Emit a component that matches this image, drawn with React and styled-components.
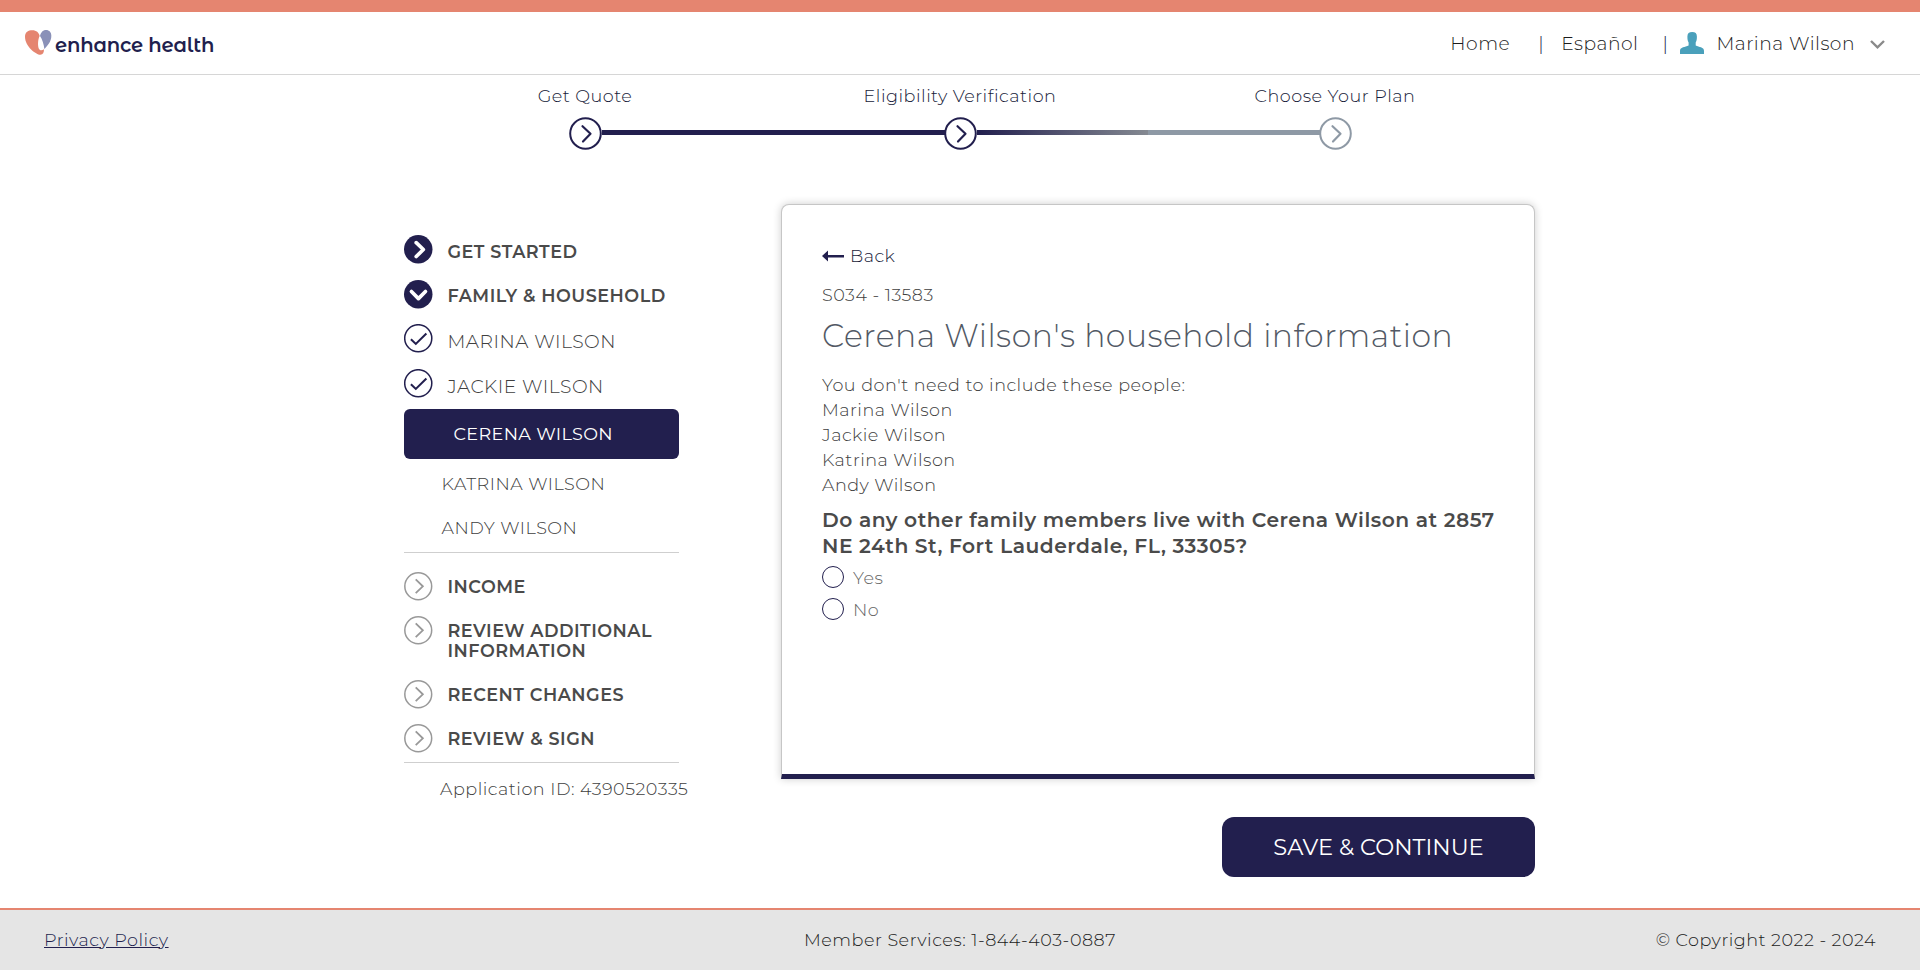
import React from 'react';
import styled, { createGlobalStyle, css } from 'styled-components';

const navy = '#221f4e';
const coral = '#e58570';
const slate = '#8e99a5';

const GlobalStyle = createGlobalStyle`
  *, *::before, *::after { box-sizing: border-box; }
  body {
    margin: 0;
    background: #fff;
    color: #404040;
    font-family: Montserrat, Inter, "Liberation Sans", sans-serif;
    font-size: 17.6px;
    font-weight: 300;
    letter-spacing: 0.5px;
  }
`;

const Page = styled.div`
  min-height: 970px;
  display: flex;
  flex-direction: column;
`;

const Header = styled.header`
  height: 75px;
  padding: 0 35px 0 25px;
  border-top: 12px solid ${coral};
  border-bottom: 1px solid #d6d6d6;
  display: flex;
  align-items: center;
  justify-content: space-between;
`;

const Logo = styled.div`
  display: flex;
  align-items: center;
  gap: 3px;
  color: ${navy};

  svg { display: block; margin-top: -2px; }
`;

const Wordmark = styled.span`
  padding-top: 3px;
  font-family: "Montserrat Alternates", Montserrat, Inter, sans-serif;
  font-size: 19.6px;
  font-weight: 600;
  letter-spacing: -0.2px;
  line-height: 24px;
`;

const TopNav = styled.nav`
  display: flex;
  align-items: center;
  color: #1c1c1c;
  font-size: 18.7px;
  white-space: nowrap;
`;

const NavLink = styled.span``;

const Pipe = styled.span`
  margin: 0 ${(p) => p.$after}px 0 ${(p) => p.$before}px;
  color: ${navy};
`;

const UserMenu = styled.div`
  display: flex;
  align-items: center;

  svg:first-child { margin-right: 12px; }
  svg:last-child { margin: 3px 0 0 15px; }
`;

const Stepper = styled.section`
  width: 1125px;
  margin: 9px auto 0;
  display: flex;
  flex-direction: column;
  align-items: center;
`;

const StepLabels = styled.div`
  width: 100%;
  display: grid;
  grid-template-columns: repeat(3, 1fr);
  text-align: center;
  color: #161a38;
  line-height: 24px;
`;

const Track = styled.div`
  width: 783px;
  height: 33px;
  margin: 9px 0 0 1.5px;
  display: flex;
  align-items: center;

  svg { display: block; flex: none; }
`;

const TrackLine = styled.div`
  flex: 1;
  height: 5px;
  margin: -2px -1px 0 0;
  background: ${(p) => (p.$partial ? `linear-gradient(to right, ${navy} 0%, #858a92 50%, ${slate} 50%)` : navy)};
`;

const Main = styled.main`
  width: 1131px;
  margin: 54px 0 0 404px;
  display: grid;
  grid-template-columns: 275px 754px;
  justify-content: space-between;
  align-items: start;
`;

const Sidebar = styled.aside`
  padding-top: 31px;
  display: flex;
  flex-direction: column;
`;

const Item = styled.div`
  height: ${(p) => p.$height}px;
  display: flex;
  align-items: flex-start;
  gap: 15px;

  svg { display: block; flex: none; }
`;

const ItemText = styled.span`
  padding-top: ${(p) => p.$drop}px;
  line-height: 20px;
  ${(p) =>
    p.$section
      ? css`color: #4a4a4a; font-weight: 600;`
      : css`font-size: 18.7px;`}
`;

const ActiveItem = styled.div`
  height: 50px;
  margin-bottom: 3px;
  padding-left: 49.5px;
  border-radius: 6px;
  background: ${navy};
  color: #fff;
  font-weight: 400;
  letter-spacing: 0.35px;
  line-height: 50px;
`;

const PendingItem = styled.div`
  padding-left: 37.5px;
  line-height: 44px;
`;

const Divider = styled.hr`
  width: 100%;
  height: 1px;
  margin: ${(p) => p.$top}px 0 ${(p) => p.$bottom}px;
  border: 0;
  background: #cfcfcf;
`;

const ApplicationId = styled.div`
  padding-left: 36px;
  line-height: 20px;
  white-space: nowrap;
`;

const Content = styled.div`
  display: flex;
  flex-direction: column;
  align-items: flex-end;
`;

const Card = styled.section`
  width: 754px;
  height: 575px;
  padding: 38px 36px 0 40px;
  border: 1px solid #c6c6c6;
  border-bottom: 5px solid ${navy};
  border-radius: 8px 8px 0 0;
  background: #fff;
  box-shadow: 0 0 8px rgba(0, 0, 0, 0.2);
`;

const BackLink = styled.div`
  display: flex;
  align-items: center;
  gap: 6px;
  color: #161a38;
  line-height: 26px;
`;

const ScreenCode = styled.div`
  margin-top: 13px;
  line-height: 26px;
`;

const Title = styled.h1`
  margin: 8px 0 0;
  color: #525965;
  font-size: 31.5px;
  font-weight: 300;
  line-height: 40px;
`;

const Paragraph = styled.div`
  margin-top: ${(p) => p.$top || 0}px;
  line-height: 25px;
`;

const Question = styled.div`
  margin-top: 10px;
  color: #4a4a4a;
  font-size: 20.26px;
  font-weight: 600;
  line-height: 26px;
`;

const Option = styled.label`
  margin-top: ${(p) => p.$top}px;
  height: 22px;
  display: flex;
  align-items: center;
  gap: 9px;
  color: #666;
  line-height: 22px;
`;

const Radio = styled.span`
  width: 22px;
  height: 22px;
  border: 1px solid ${navy};
  border-radius: 50%;
`;

const OptionText = styled.span`
  padding-top: 2px;
`;

const SaveButton = styled.button`
  width: 313px;
  height: 60px;
  margin-top: 38px;
  padding: 0;
  border: 0;
  border-radius: 12px;
  background: ${navy};
  color: #fff;
  font-family: inherit;
  font-size: 22.6px;
  font-weight: 400;
  letter-spacing: 0;
`;

const Footer = styled.footer`
  height: 62px;
  margin-top: auto;
  padding: 0 44px 2px;
  border-top: 2px solid ${coral};
  background: #e5e5e5;
  color: #1c1c1c;
  display: grid;
  grid-template-columns: 1fr auto 1fr;
  align-items: center;
`;

const PrivacyLink = styled.a`
  justify-self: start;
  color: ${navy};
  text-decoration: underline;
`;

const Copyright = styled.span`
  justify-self: end;
`;

const Heart = () => (
  <svg width="27" height="25" viewBox="0 0 81 75">
    <path fill={coral} d="M0 20C0 6 10 1 22 1c12 0 20 7 22 17-6 12-6 30-2 39 4 6 10 4 15 1 0 10-3 16-11 16C34 74 0 50 0 20z" />
    <path fill="#8a91b8" d="M45 18C48 5 56 0 63 0c10 0 16 7 16 17 0 18-11 29-21 40-1-12-6-29-13-39z" />
  </svg>
);

const UserIcon = () => (
  <svg width="24" height="22" viewBox="0 0 24 22">
    <path fill="#4aa0bb" d="M7.4 4.6C7.4 1.4 9 0 12.2 0s4.7 1.4 4.7 4.6c0 2.8-.3 4.6-1.2 5.8v3.2c3.3 1.6 8.3 1.6 8.3 5.2V22H0v-3.2c0-3.6 5.2-3.6 8.6-5.2v-3.2C7.7 9.2 7.4 7.4 7.4 4.6z" />
  </svg>
);

const MenuChevron = () => (
  <svg width="15" height="9" viewBox="0 0 15 9" fill="none" stroke="#8a8a8a" strokeWidth="2.4">
    <path d="M1 1l6.5 6.3L14 1" />
  </svg>
);

const StepIcon = ({ color }) => (
  <svg width="33" height="33" viewBox="0 0 33 33" fill="none" stroke={color} strokeWidth="2">
    <circle cx="16.5" cy="16.5" r="15.3" fill="#fff" />
    <path d="M13.5 9.2l8 7.5-7.5 7.8" strokeWidth="2.2" strokeLinecap="round" strokeLinejoin="round" />
  </svg>
);

const SolidIcon = ({ down }) => (
  <svg width="28.5" height="28.5" viewBox="0 0 28 28" fill="none" stroke="#fff" strokeWidth="3.6" strokeLinecap="round" strokeLinejoin="round">
    <circle cx="14" cy="14" r="14" fill={navy} stroke="none" />
    <path d={down ? 'M7.3 11.3l6.9 7 6.9-7' : 'M12 7.5l7 6.7-7 7'} />
  </svg>
);

const CheckIcon = () => (
  <svg width="28.5" height="28.5" viewBox="0 0 28 28" fill="none" stroke={navy}>
    <circle cx="14" cy="14" r="13.3" strokeWidth="1.5" />
    <path d="M6.8 15l4.8 4.6L22 9.4" strokeWidth="2" />
  </svg>
);

const PendingIcon = () => (
  <svg width="28.5" height="28.5" viewBox="0 0 28 28" fill="none" stroke="#999">
    <circle cx="14" cy="14" r="13.2" strokeWidth="1.5" />
    <path d="M11.5 7.2l7 6.9-7 6.7" strokeWidth="1.8" />
  </svg>
);

const BackArrow = () => (
  <svg width="22" height="12" viewBox="0 0 22 12" fill={navy}>
    <path d="M0 6L6 .5V5h16v2.5H6v4z" />
  </svg>
);

const people = ['Marina Wilson', 'Jackie Wilson', 'Katrina Wilson', 'Andy Wilson'];

export default function App() {
  return (
    <Page>
      <GlobalStyle />
      <Header>
        <Logo><Heart /><Wordmark>enhance health</Wordmark></Logo>
        <TopNav>
          <NavLink>Home</NavLink>
          <Pipe $before={28} $after={17}>|</Pipe>
          <NavLink>Español</NavLink>
          <Pipe $before={24} $after={12}>|</Pipe>
          <UserMenu><UserIcon />Marina Wilson<MenuChevron /></UserMenu>
        </TopNav>
      </Header>

      <Stepper>
        <StepLabels>
          <span>Get Quote</span>
          <span>Eligibility Verification</span>
          <span>Choose Your Plan</span>
        </StepLabels>
        <Track>
          <StepIcon color={navy} />
          <TrackLine />
          <StepIcon color={navy} />
          <TrackLine $partial />
          <StepIcon color={slate} />
        </Track>
      </Stepper>

      <Main>
        <Sidebar>
          <Item $height={45}><SolidIcon /><ItemText $section $drop={7}>GET STARTED</ItemText></Item>
          <Item $height={44}><SolidIcon down /><ItemText $section $drop={6}>FAMILY &amp; HOUSEHOLD</ItemText></Item>
          <Item $height={45}><CheckIcon /><ItemText $drop={8}>MARINA WILSON</ItemText></Item>
          <Item $height={40}><CheckIcon /><ItemText $drop={8}>JACKIE WILSON</ItemText></Item>
          <ActiveItem>CERENA WILSON</ActiveItem>
          <PendingItem>KATRINA WILSON</PendingItem>
          <PendingItem>ANDY WILSON</PendingItem>
          <Divider $top={2} $bottom={19} />
          <Item $height={44}><PendingIcon /><ItemText $section $drop={5}>INCOME</ItemText></Item>
          <Item $height={64}><PendingIcon /><ItemText $section $drop={5}>REVIEW ADDITIONAL INFORMATION</ItemText></Item>
          <Item $height={44}><PendingIcon /><ItemText $section $drop={5}>RECENT CHANGES</ItemText></Item>
          <Item $height={38}><PendingIcon /><ItemText $section $drop={5}>REVIEW &amp; SIGN</ItemText></Item>
          <Divider $top={0} $bottom={16} />
          <ApplicationId>Application ID: 4390520335</ApplicationId>
        </Sidebar>

        <Content>
          <Card>
            <BackLink><BackArrow />Back</BackLink>
            <ScreenCode>S034 - 13583</ScreenCode>
            <Title>Cerena Wilson's household information</Title>
            <Paragraph $top={16}>You don't need to include these people:</Paragraph>
            {people.map((name) => <Paragraph key={name}>{name}</Paragraph>)}
            <Question>Do any other family members live with Cerena Wilson at 2857 NE 24th St, Fort Lauderdale, FL, 33305?</Question>
            <Option $top={7}><Radio /><OptionText>Yes</OptionText></Option>
            <Option $top={10}><Radio /><OptionText>No</OptionText></Option>
          </Card>
          <SaveButton>SAVE &amp; CONTINUE</SaveButton>
        </Content>
      </Main>

      <Footer>
        <PrivacyLink>Privacy Policy</PrivacyLink>
        <span>Member Services: 1-844-403-0887</span>
        <Copyright>© Copyright 2022 - 2024</Copyright>
      </Footer>
    </Page>
  );
}
